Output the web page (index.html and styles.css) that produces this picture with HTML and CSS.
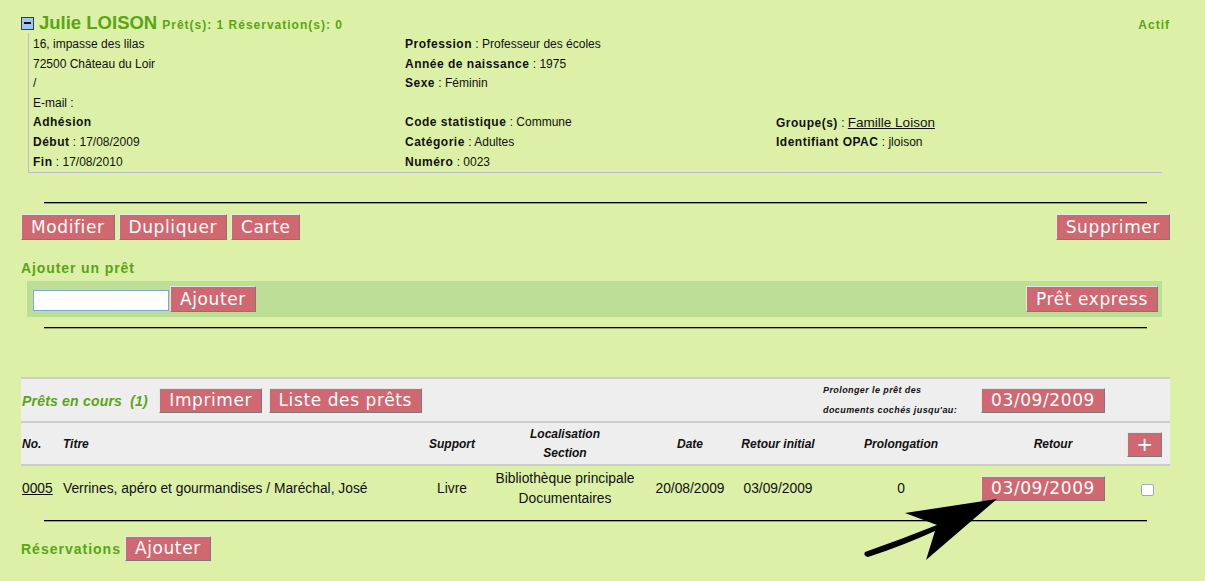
FILE: index.html
```html
<!DOCTYPE html>
<html lang="fr">
<head>
<meta charset="utf-8">
<title>Julie LOISON</title>
<link rel="stylesheet" href="styles.css">
</head>
<body>
<div class="page">
  <div class="head">
    <span class="toggle"><span class="toggle-bar"></span></span>
    <span class="name">Julie LOISON</span>
    <span class="counts">Prêt(s): 1 Réservation(s): 0</span>
    <span class="status">Actif</span>
  </div>

  <div class="details">
    <div>16, impasse des lilas</div>
    <div><b>Profession</b> : Professeur des écoles</div>
    <div></div>
    <div>72500 Château du Loir</div>
    <div><b>Année de naissance</b> : 1975</div>
    <div></div>
    <div>/</div>
    <div><b>Sexe</b> : Féminin</div>
    <div></div>
    <div>E-mail :</div>
    <div></div>
    <div></div>
    <div><b>Adhésion</b></div>
    <div><b>Code statistique</b> : Commune</div>
    <div><b>Groupe(s)</b> : <a class="group-link" href="#">Famille Loison</a></div>
    <div><b>Début</b> : 17/08/2009</div>
    <div><b>Catégorie</b> : Adultes</div>
    <div><b>Identifiant OPAC</b> : jloison</div>
    <div><b>Fin</b> : 17/08/2010</div>
    <div><b>Numéro</b> : 0023</div>
    <div></div>
  </div>

  <hr class="sep sep-first">

  <div class="actions">
    <div class="btn-group">
      <button class="btn">Modifier</button>
      <button class="btn">Dupliquer</button>
      <button class="btn">Carte</button>
    </div>
    <button class="btn">Supprimer</button>
  </div>

  <h3 class="section-title add-title">Ajouter un prêt</h3>
  <div class="add-bar">
    <div class="add-left">
      <input class="cb-input" type="text">
      <button class="btn">Ajouter</button>
    </div>
    <button class="btn">Prêt express</button>
  </div>

  <hr class="sep sep-second">

  <table class="loans">
    <colgroup>
      <col class="c-no"><col class="c-title"><col class="c-support"><col class="c-loc">
      <col class="c-date"><col class="c-ret"><col class="c-prol"><col class="c-retour"><col class="c-chk">
    </colgroup>
    <tr class="row-top">
      <td colspan="6" class="left top-cell">
        <span class="loans-title">Prêts en cours&nbsp; (1)</span>
        <button class="btn btn-sm btn-print">Imprimer</button>
        <button class="btn btn-sm btn-list">Liste des prêts</button>
      </td>
      <td class="left prolong">Prolonger le prêt des<br>documents cochés jusqu'au:</td>
      <td class="left"><button class="btn btn-sm">03/09/2009</button></td>
      <td></td>
    </tr>
    <tr class="row-head">
      <th class="left th-no">No.</th>
      <th class="left th-title">Titre</th>
      <th>Support</th>
      <th>Localisation<br>Section</th>
      <th>Date</th>
      <th>Retour initial</th>
      <th>Prolongation</th>
      <th>Retour</th>
      <th class="left th-plus"><button class="btn btn-sm btn-plus">+</button></th>
    </tr>
    <tr class="row-data">
      <td class="left td-no"><a class="num-link" href="#">0005</a></td>
      <td class="left td-title">Verrines, apéro et gourmandises / Maréchal, José</td>
      <td>Livre</td>
      <td>Bibliothèque principale<br>Documentaires</td>
      <td>20/08/2009</td>
      <td>03/09/2009</td>
      <td>0</td>
      <td class="left"><button class="btn btn-sm">03/09/2009</button></td>
      <td><span class="checkbox"></span></td>
    </tr>
  </table>

  <hr class="sep sep-third">

  <div class="resa">
    <h3 class="section-title resa-title">Réservations</h3>
    <button class="btn btn-sm">Ajouter</button>
  </div>

  <svg class="arrow" width="145" height="70" viewBox="0 0 145 70" aria-hidden="true">
    <path d="M137,4 L45,18 L77,30 Q42,44 5,57 Q3,61 8,62 Q42,51 75,36 L66,65 Z" fill="#000"/>
  </svg>
</div>
</body>
</html>
```

FILE: styles.css
```css
* { box-sizing: border-box; }

html, body {
  margin: 0;
  padding: 0;
  background: #dcf0a8;
}

body {
  font-family: "Liberation Sans", Arial, sans-serif;
  font-size: 12px;
  color: #111;
}

.page {
  position: relative;
  padding: 12px 35px 0 21px;
  height: 581px;
}

/* ---------- header ---------- */
.head {
  display: flex;
  align-items: baseline;
  height: 21px;
  line-height: 21px;
}

.toggle {
  align-self: center;
  width: 13px;
  height: 13px;
  margin-top: 1px;
  background: #9cc6f5;
  border: 1px solid #3a3a4a;
  display: flex;
  align-items: center;
  justify-content: center;
}

.toggle-bar {
  width: 7px;
  height: 2px;
  background: #111;
}

.name {
  margin-left: 5px;
  font-size: 18.5px;
  font-weight: bold;
  color: #5aa514;
}

.counts {
  margin-left: 5px;
  font-size: 12px;
  font-weight: bold;
  letter-spacing: 1px;
  color: #5aa514;
}

.status {
  margin-left: auto;
  font-size: 12px;
  font-weight: bold;
  letter-spacing: 1px;
  color: #5aa514;
}

/* ---------- details ---------- */
.details {
  margin: 0 8px 0 7px;
  padding: 2px 0 0 4px;
  border-left: 1px solid #bcbccc;
  border-bottom: 1px solid #bcbccc;
  display: grid;
  grid-template-columns: 372px 371px 1fr;
  grid-template-rows: repeat(7, 19.6px);
  line-height: 19.6px;
  height: 140px;
  font-size: 12px;
}

.details b {
  letter-spacing: 0.5px;
}

.group-link {
  color: #111;
  font-size: 13.5px;
}

/* ---------- separators ---------- */
.sep {
  width: 96%;
  height: 0;
  margin: 0 auto;
  border: 0;
  border-top: 1px solid #000;
  border-bottom: 1px solid #9aa080;
}

.sep-first { margin-top: 29px; }
.sep-second { margin-top: 10px; }
.sep-third { margin-top: 10px; }

/* ---------- buttons ---------- */
.btn {
  font-family: "DejaVu Sans", sans-serif;
  font-size: 17px;
  letter-spacing: 0.6px;
  color: #fff;
  background: #cf6870;
  border: 1px solid;
  border-color: #e6e6e6 #7a7a7a #7a7a7a #e6e6e6;
  padding: 0 9px;
  height: 26px;
  line-height: 24px;
  margin: 0;
  cursor: pointer;
}

.btn-sm {
  height: 25px;
  line-height: 23px;
}

.actions {
  margin-top: 10px;
  display: flex;
  justify-content: space-between;
}

.btn-group {
  display: flex;
  gap: 4px;
}

/* ---------- add loan ---------- */
.section-title {
  margin: 0;
  font-size: 14px;
  font-weight: bold;
  letter-spacing: 0.9px;
  color: #5aa514;
  line-height: 20px;
}

.add-title {
  margin-top: 18px;
  margin-bottom: 3px;
}

.add-bar {
  margin: 0 8px 0 6px;
  height: 36px;
  background: #bcde96;
  padding: 0 4px 0 6px;
  display: flex;
  align-items: center;
  justify-content: space-between;
}

.add-left {
  display: flex;
  align-items: center;
  gap: 1px;
}

.cb-input {
  width: 136px;
  height: 21px;
  margin-top: 3px;
  border: 1px solid #7ea7dc;
  background: #fff;
  padding: 0 2px;
}

/* ---------- loans table ---------- */
.loans {
  margin-top: 48px;
  width: 1149px;
  border-collapse: collapse;
  table-layout: fixed;
  border-top: 2px solid #cccccc;
}

.c-no { width: 38px; }
.c-title { width: 360px; }
.c-support { width: 66px; }
.c-loc { width: 160px; }
.c-date { width: 90px; }
.c-ret { width: 86px; }
.c-prol { width: 160px; }
.c-retour { width: 144px; }
.c-chk { width: 45px; }

.loans td, .loans th {
  padding: 0;
  text-align: center;
  vertical-align: middle;
}

.loans .left { text-align: left; }

.row-top {
  height: 44px;
  background: #eeeeee;
  border-bottom: 2px solid #cccccc;
}

.top-cell {
  padding-left: 1px !important;
  white-space: nowrap;
}

.loans-title {
  font-size: 14px;
  font-weight: bold;
  font-style: italic;
  letter-spacing: 0.2px;
  color: #5aa514;
  vertical-align: middle;
}

.btn-print { margin-left: 8px; vertical-align: middle; }
.btn-list { margin-left: 3px; vertical-align: middle; }

.prolong {
  padding-left: 2px !important;
  font-size: 9px;
  font-weight: bold;
  font-style: italic;
  letter-spacing: 0.4px;
  line-height: 20px;
  white-space: nowrap;
}

.row-head {
  height: 43px;
  background: #eeeeee;
  border-bottom: 2px solid #cccccc;
}

.row-head th {
  font-size: 12px;
  font-weight: bold;
  font-style: italic;
  line-height: 19px;
  padding-top: 1px;
}

.th-no { padding-left: 1px !important; }
.th-title { padding-left: 4px !important; }
.th-plus { padding-left: 2px !important; }

.btn-plus {
  width: 35px;
  padding: 0;
  font-size: 20px;
  font-weight: normal;
  letter-spacing: 0;
}

.row-data {
  height: 45px;
}

.row-data td {
  font-size: 13.8px;
  line-height: 20px;
  padding-top: 1px;
}

.td-no { padding-left: 1px !important; }
.td-title { padding-left: 4px !important; white-space: nowrap; }

.num-link { color: #111; }

.checkbox {
  display: inline-block;
  width: 13px;
  height: 12px;
  margin-top: 2px;
  background: #fff;
  border: 1px solid #9aaabb;
  border-radius: 2px;
  vertical-align: middle;
}

/* ---------- reservations ---------- */
.resa {
  margin-top: 14px;
  display: flex;
  align-items: center;
  gap: 4px;
}

.resa-title {
  letter-spacing: 1px;
}

/* ---------- arrow overlay ---------- */
.arrow {
  position: absolute;
  left: 860px;
  top: 495px;
}
```
